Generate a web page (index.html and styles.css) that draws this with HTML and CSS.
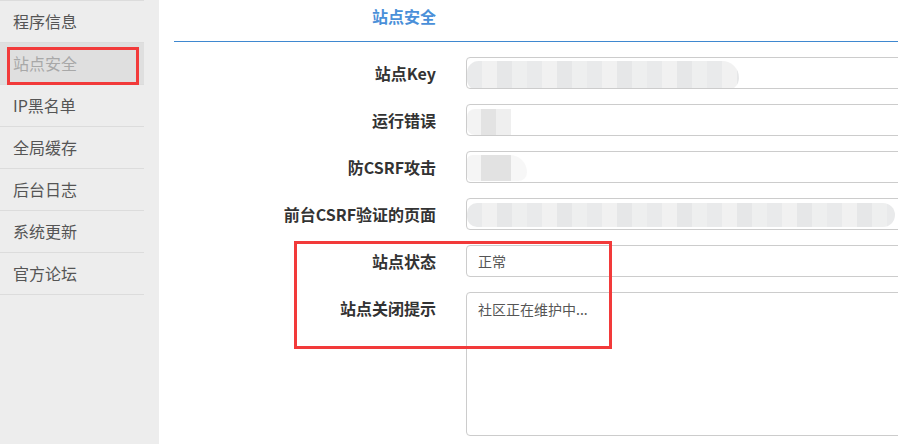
FILE: index.html
```html
<!DOCTYPE html>
<html lang="zh-CN">
<head>
<meta charset="utf-8">
<title>站点安全</title>
<link rel="stylesheet" href="styles.css">
</head>
<body>
<div class="page">
  <aside class="sidebar">
    <ul class="menu">
      <li class="menu-item">程序信息</li>
      <li class="menu-item active">站点安全</li>
      <li class="menu-item">IP黑名单</li>
      <li class="menu-item">全局缓存</li>
      <li class="menu-item">后台日志</li>
      <li class="menu-item">系统更新</li>
      <li class="menu-item">官方论坛</li>
    </ul>
  </aside>
  <main class="main">
    <div class="head"><h2 class="title">站点安全</h2></div>
    <form class="form">
      <div class="row">
        <label class="label">站点Key</label>
        <div class="input"><span class="blur blur-key"></span></div>
      </div>
      <div class="row">
        <label class="label">运行错误</label>
        <div class="input"><span class="blur blur-small"></span></div>
      </div>
      <div class="row">
        <label class="label">防CSRF攻击</label>
        <div class="input"><span class="blur blur-csrf"></span></div>
      </div>
      <div class="row">
        <label class="label">前台CSRF验证的页面</label>
        <div class="input"><span class="blur blur-long"></span></div>
      </div>
      <div class="row">
        <label class="label">站点状态</label>
        <div class="input"><span class="value">正常</span></div>
      </div>
      <div class="row row-top">
        <label class="label">站点关闭提示</label>
        <div class="textarea">社区正在维护中...</div>
      </div>
    </form>
  </main>
  <div class="mark mark-menu"></div>
  <div class="mark mark-form"></div>
</div>
</body>
</html>
```

FILE: styles.css
```css
html, body {
  margin: 0;
  padding: 0;
  overflow: hidden;
  background: #fff;
}
body {
  font-family: "Noto Sans CJK SC", "Noto Sans", "Liberation Sans", sans-serif;
  color: #333;
}
.page {
  position: relative;
  display: flex;
  height: 444px;
}
.sidebar {
  width: 159px;
  flex: none;
  background: #ededed;
}
.menu {
  list-style: none;
  margin: 0;
  padding: 0;
  width: 144px;
}
.menu-item {
  height: 41px;
  line-height: 41px;
  border-top: 1px solid #dcdcdc;
  padding-left: 13px;
  font-size: 16px;
  color: #555;
}
.menu-item:last-child {
  border-bottom: 1px solid #dcdcdc;
}
.menu-item.active {
  background: #dfdfdf;
  color: #a8a8a8;
}
.main {
  flex: 1;
  min-width: 0;
  padding-left: 15px;
}
.head {
  height: 41px;
  border-bottom: 1px solid #3f88d0;
}
.title {
  margin: 0;
  width: 262px;
  padding-top: 5px;
  line-height: 22px;
  font-size: 16px;
  font-weight: bold;
  color: #4a90d9;
  text-align: right;
}
.form {
  padding-top: 15px;
}
.row {
  display: flex;
  align-items: center;
  gap: 30px;
  margin-bottom: 15px;
}
.row-top {
  align-items: flex-start;
}
.label {
  width: 262px;
  flex: none;
  text-align: right;
  font-size: 16px;
  font-weight: bold;
  line-height: 32px;
  color: #333;
}
.row-top .label {
  line-height: 22px;
  padding-top: 5px;
}
.input {
  box-sizing: border-box;
  width: 460px;
  flex: none;
  height: 32px;
  border: 1px solid #cccccc;
  border-radius: 4px;
  display: flex;
  align-items: center;
  overflow: hidden;
  font-size: 14px;
  color: #555;
}
.value {
  padding-left: 11px;
}
.textarea {
  box-sizing: border-box;
  width: 460px;
  flex: none;
  height: 144px;
  border: 1px solid #cccccc;
  border-radius: 4px;
  padding: 6px 11px;
  font-size: 14px;
  line-height: 20px;
  color: #555;
}
.blur {
  display: block;
  height: 28px;
  margin-top: 4px;
  border-radius: 14px 4px 4px 14px;
  background: repeating-linear-gradient(90deg, #e9eaeb 0 15px, #f1f1f1 15px 30px, #e6e7e8 30px 45px, #eeefef 45px 60px);
}
.blur-key {
  width: 272px;
  height: 30px;
  margin-top: 6px;
  border-radius: 14px 20px 16px 14px;
}
.blur-small {
  width: 44px;
  height: 26px;
  border-radius: 8px 0 0 8px;
  background: linear-gradient(90deg, #f3f3f3 0 14px, #e3e3e3 14px 29px, #efefef 29px);
}
.blur-csrf {
  width: 60px;
  height: 26px;
  margin-top: 2px;
  border-radius: 6px 20px 10px 6px;
  background: linear-gradient(90deg, #f5f5f5 0 14px, #e2e2e2 14px 44px, #f7f7f7 44px);
}
.blur-long {
  width: 428px;
  height: 24px;
  margin-top: 2px;
  border-radius: 10px 12px 12px 10px;
}
.mark {
  position: absolute;
  box-sizing: border-box;
  border: 3px solid #f23a3a;
  pointer-events: none;
}
.mark-menu {
  left: 7px;
  top: 47px;
  width: 132px;
  height: 38px;
}
.mark-form {
  left: 294px;
  top: 241px;
  width: 318px;
  height: 108px;
}
```
